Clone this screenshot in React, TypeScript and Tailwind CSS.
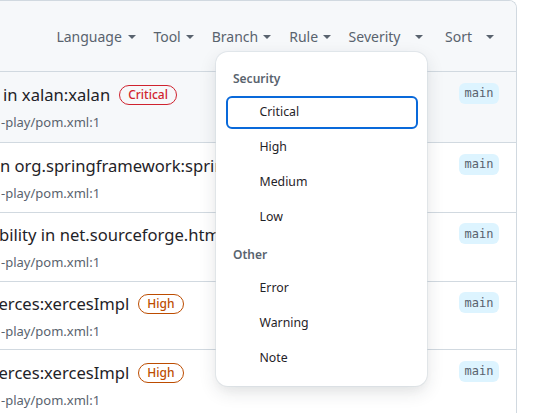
import React from "react";

interface Alert {
  id: number;
  title: string;
  offset: string;
  severity?: "Critical" | "High";
  height: string;
  hovered?: boolean;
}

const alerts: Alert[] = [
  { id: 1, title: "in xalan:xalan", offset: "pl-[3px]", severity: "Critical", height: "h-[71px]", hovered: true },
  { id: 2, title: "n org.springframework:spring-web", offset: "pl-0", height: "h-[69.5px]" },
  { id: 3, title: "bility in net.sourceforge.htmlunit:htmlunit", offset: "-ml-[1px]", height: "h-[69px]" },
  { id: 4, title: "erces:xercesImpl", offset: "-ml-[1.5px]", severity: "High", height: "h-[68.5px]" },
  { id: 5, title: "erces:xercesImpl", offset: "-ml-[1.5px]", severity: "High", height: "h-[69px]" },
];

const menu = [
  { group: "Security", items: ["Critical", "High", "Medium", "Low"] },
  { group: "Other", items: ["Error", "Warning", "Note"] },
];

function Caret() {
  return (
    <svg width="8" height="4" viewBox="0 0 8 4" className="shrink-0">
      <path d="M0 0h8L4 4z" fill="#59636e" />
    </svg>
  );
}

function SeverityLabel({ level }: { level: "Critical" | "High" }) {
  const tone =
    level === "Critical"
      ? "border-[#cf222e] text-[#d1242f]"
      : "border-[#bc4c00] text-[#bc4c00]";
  return (
    <span
      className={`flex h-[20px] items-center rounded-full border px-[8px] text-[12px] font-medium leading-none ${tone}`}
    >
      {level}
    </span>
  );
}

export default function App() {
  return (
    <div className="relative h-[413px] w-[556px] overflow-hidden bg-white font-['Noto_Sans',sans-serif]">
      {/* Alert list box (left side runs off screen) */}
      <div className="w-[517px] overflow-hidden rounded-tr-[8px] border-t border-r border-[#d1d9e0]">
        {/* Filter bar */}
        <div className="flex h-[70px] items-center justify-end bg-[#f6f8fa] pr-[22px] pt-[1px] text-[14px] text-[#59636e]">
          <div className="flex items-center">
            <span>Language</span>
            <span className="ml-[6px]"><Caret /></span>
          </div>
          <div className="ml-[17.5px] flex items-center">
            <span>Tool</span>
            <span className="ml-[5px]"><Caret /></span>
          </div>
          <div className="ml-[18px] flex items-center">
            <span>Branch</span>
            <span className="ml-[5px]"><Caret /></span>
          </div>
          <div className="ml-[18px] flex items-center">
            <span>Rule</span>
            <span className="ml-[5px]"><Caret /></span>
          </div>
          <div className="ml-[17.5px] flex items-center">
            <span>Severity</span>
            <span className="ml-[14px]"><Caret /></span>
          </div>
          <div className="ml-[22.5px] flex items-center">
            <span>Sort</span>
            <span className="ml-[14px]"><Caret /></span>
          </div>
        </div>

        {/* Rows */}
        {alerts.map((a) => (
          <div
            key={a.id}
            className={`flex items-start border-t border-[#d1d9e0] pt-[10.5px] ${a.height} ${a.hovered ? "bg-[#f6f8fa]" : "bg-white"}`}
          >
            {/* title column stops where the open menu starts */}
            <div className="w-[216px] shrink-0 overflow-hidden">
              <div className={`flex h-[24px] items-center gap-[9px] whitespace-nowrap ${a.offset}`}>
                <span className="text-[16.6px] leading-[24px] text-[#1f2328]">{a.title}</span>
                {a.severity && <SeverityLabel level={a.severity} />}
              </div>
              <div className="mt-[6px] pl-[1px] text-[13px] leading-[18px] text-[#59636e]">
                -play/pom.xml:1
              </div>
            </div>
            <span className="ml-auto mr-[17px] flex h-[21px] items-center rounded-[6px] bg-[#ddf4ff] px-[5.5px] font-['DejaVu_Sans_Mono',monospace] text-[12px] text-[#59636e]">
              main
            </span>
          </div>
        ))}
      </div>

      {/* Severity dropdown */}
      <div className="absolute left-[216px] top-[52px] h-[334px] w-[211px] rounded-[12px] bg-white pt-[8px] shadow-[0_0_0_1px_#d1d9e080,0_6px_12px_-3px_#25292e0a,0_6px_18px_0_#25292e1f]">
        {menu.map((g) => (
          <div key={g.group}>
            <div className="flex h-[35.2px] items-center pl-[17px] pt-[2px] text-[12px] font-semibold text-[#59636e]">
              {g.group}
            </div>
            {g.items.map((item) => (
              <div key={item} className="h-[35.2px] px-[9.5px] py-[1px]">
                <div
                  className={`flex h-full items-center rounded-[6px] border-2 pb-[2px] pl-[32px] text-[12.3px] text-[#1f2328] ${item === "Critical" ? "border-[#0969da]" : "border-transparent"}`}
                >
                  {item}
                </div>
              </div>
            ))}
          </div>
        ))}
      </div>
    </div>
  );
}
